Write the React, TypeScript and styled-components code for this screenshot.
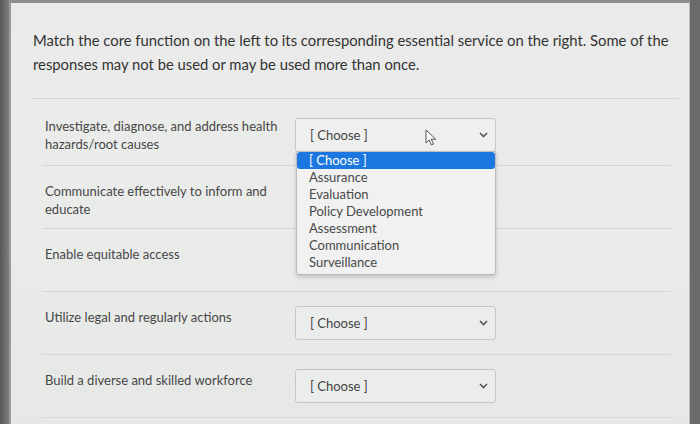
import styled, { createGlobalStyle } from 'styled-components';

const GlobalStyle = createGlobalStyle`
  body {
    margin: 0;
    background: #6a6a6a;
    font-family: Lato, 'Open Sans', sans-serif;
  }
`;

// covered: the open list of row 1 lies over these selects
const rows = [
  { label: ['Investigate, diagnose, and address health', 'hazards/root causes'], open: true },
  { label: ['Communicate effectively to inform and', 'educate'], covered: true },
  { label: ['Enable equitable access'], covered: true },
  { label: ['Utilize legal and regularly actions'] },
  { label: ['Build a diverse and skilled workforce'] },
];

const options = [
  '[ Choose ]',
  'Assurance',
  'Evaluation',
  'Policy Development',
  'Assessment',
  'Communication',
  'Surveillance',
];

const Chevron = () => (
  <svg width='9' height='6' viewBox='0 0 9 6'>
    <path d='M1 1l3.5 3.5L8 1' fill='none' stroke='#555' strokeWidth='1.6' />
  </svg>
);

const Cursor = () => (
  <svg width='12' height='17' viewBox='0 0 12 17'>
    <path
      d='M1 1v13l3.2-3 2.2 5 2-.9-2.1-4.9h4.4z'
      fill='#fff'
      stroke='#555'
      strokeWidth='1'
      strokeLinejoin='round'
    />
  </svg>
);

const App = () => {
  return (
    <Frame>
      <GlobalStyle />
      <Edge />
      <Panel>
        <Question>
          Match the core function on the left to its corresponding essential service on the right.
          Some of the responses may not be used or may be used more than once.
        </Question>
        <List>
          {rows.map((row, i) => (
            <Row key={i} $first={i === 0}>
              <Label $first={i === 0}>
                {row.label.map((l) => (
                  <span key={l}>{l}</span>
                ))}
              </Label>
              <SelectWrap $first={i === 0}>
                {!row.covered && (
                  <Select $open={row.open}>
                    <span>[ Choose ]</span>
                    {row.open && (
                      <CursorSpot>
                        <Cursor />
                      </CursorSpot>
                    )}
                    <Chevron />
                  </Select>
                )}
                {row.open && (
                  <Menu>
                    {options.map((o, j) => (
                      <Option key={o} $active={j === 0}>
                        {o}
                      </Option>
                    ))}
                  </Menu>
                )}
              </SelectWrap>
            </Row>
          ))}
        </List>
      </Panel>
    </Frame>
  );
};
export default App;

const Frame = styled.div`
  display: flex;
  width: 700px;
  height: 424px;
  overflow: hidden;
`;

const Edge = styled.div`
  width: 9px;
  flex-shrink: 0;
  background: linear-gradient(90deg, #555, #7e7e7e);
`;

const Panel = styled.div`
  flex: 1;
  margin-right: 10px;
  border-left: 2px solid #9a9a9a;
  border-top: 3px solid #8e8c8e;
  border-right: 1px solid #b9bbba;
  background: linear-gradient(180deg, #e9eae9 0%, #eaecea 50%, #e6e8e6 100%);
  padding: 0 10px 0 21px;
`;

const Question = styled.p`
  margin: 25px 0 0;
  padding: 0 0 22px 1px;
  font-size: 14.8px;
  line-height: 24px;
  color: #333;
  border-bottom: 1px solid #d2d4d3;
`;

const List = styled.div`
  display: flex;
  flex-direction: column;
  padding-left: 10px;
  margin-right: 8px;
`;

const Row = styled.div<{ $first?: boolean }>`
  display: grid;
  grid-template-columns: 253px 201px;
  height: ${({ $first }) => ($first ? '67px' : '63px')};
  padding-top: ${({ $first }) => ($first ? '18px' : '14px')};
  box-sizing: border-box;
  border-bottom: 1px solid #d4d6d5;
`;

const Label = styled.div<{ $first?: boolean }>`
  display: flex;
  flex-direction: column;
  margin-top: ${({ $first }) => ($first ? '0' : '2px')};
  padding-left: 3px;
  font-size: 13px;
  line-height: 18px;
  color: #474747;
`;

const SelectWrap = styled.div<{ $first?: boolean }>`
  position: relative;
  margin-top: ${({ $first }) => ($first ? '1px' : '0')};
`;

const Select = styled.div<{ $open?: boolean }>`
  position: relative;
  display: flex;
  align-items: center;
  justify-content: space-between;
  height: 34px;
  padding: 0 7px 0 14px;
  box-sizing: border-box;
  border: 1px solid #c6c8c7;
  border-radius: 3px;
  background: ${({ $open }) => ($open ? '#eeefee' : '#ebedec')};
  font-size: 13px;
  color: #444;
`;

const CursorSpot = styled.span`
  position: absolute;
  left: 129px;
  top: 10px;
  display: flex;
`;

const Menu = styled.div`
  position: absolute;
  left: 1px;
  top: 33px;
  z-index: 2;
  width: 198px;
  padding-bottom: 3px;
  border: 1px solid #bcbebd;
  border-radius: 0 0 3px 3px;
  background: #f0f1f0;
  box-shadow: 0 2px 4px rgba(0, 0, 0, 0.18);
`;

const Option = styled.div<{ $active?: boolean }>`
  height: 17px;
  padding-left: 12px;
  font-size: 13px;
  line-height: 17px;
  border-radius: ${({ $active }) => ($active ? '3px' : '0')};
  background: ${({ $active }) => ($active ? '#1c78e0' : 'transparent')};
  color: ${({ $active }) => ($active ? '#fff' : '#4a4a4a')};
`;
